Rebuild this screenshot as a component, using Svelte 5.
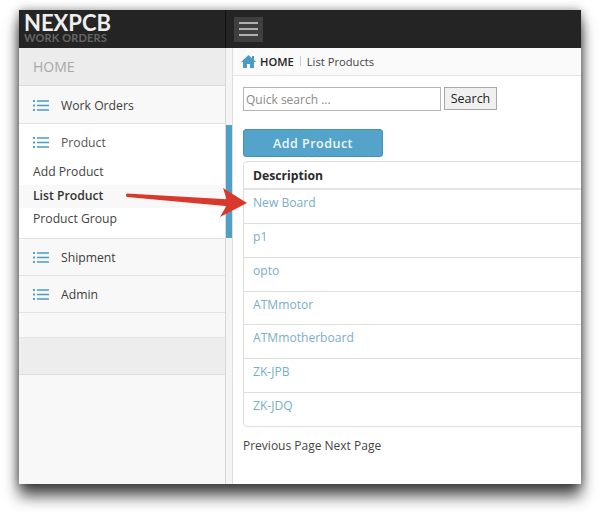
<script>
  const products = ['New Board', 'p1', 'opto', 'ATMmotor', 'ATMmotherboard', 'ZK-JPB', 'ZK-JDQ'];
  const subItems = [
    { label: 'Add Product', active: false },
    { label: 'List Product', active: true },
    { label: 'Product Group', active: false }
  ];
</script>

{#snippet listIcon()}
  <svg class="list-icon" width="16" height="11" viewBox="0 0 16 11" aria-hidden="true">
    <path d="M0 0h2v2H0zM0 4.5h2v2H0zM0 9h2v2H0z" fill="#4fa3c9" />
    <path d="M4 .2h12v1.6H4zM4 4.7h12v1.6H4zM4 9.2h12v1.6H4z" fill="#4a9dc2" />
  </svg>
{/snippet}

<div class="window">
  <header class="topbar">
    <div class="brand">
      <span class="brand-name">NEXPCB</span>
      <span class="brand-sub">WORK ORDERS</span>
    </div>
    <button class="toggle" aria-label="Toggle menu">
      <span></span><span></span><span></span>
    </button>
  </header>

  <div class="body">
    <aside class="sidebar">
      <div class="side-home">HOME</div>
      <div class="side-item first">{@render listIcon()}<span>Work Orders</span></div>
      <div class="side-group">
        <div class="side-item plain">{@render listIcon()}<span class="muted">Product</span></div>
        <ul class="sub">
          {#each subItems as item}
            <li class:active={item.active}>{item.label}</li>
          {/each}
        </ul>
      </div>
      <div class="side-item">{@render listIcon()}<span>Shipment</span></div>
      <div class="side-item">{@render listIcon()}<span>Admin</span></div>
      <div class="side-band"></div>
    </aside>

    <div class="rail"><div class="rail-mark"></div></div>

    <main class="main">
      <nav class="crumbs">
        <svg width="15" height="13" viewBox="0 0 15 13" aria-hidden="true">
          <path d="M7.500 0 11 3.200V1h2v4l2 2h-2v6H9V9H6v4H2V7H0z" fill="#4b9cc4" />
        </svg>
        <strong>HOME</strong>
        <span class="sep"></span>
        <span>List Products</span>
      </nav>

      <div class="content">
        <form class="search">
          <input type="text" placeholder="Quick search ..." />
          <button type="button">Search</button>
        </form>

        <button class="add">Add Product</button>

        <div class="table">
          <div class="head">Description</div>
          {#each products as name}
            <div class="row">{name}</div>
          {/each}
        </div>

        <p class="pager">Previous Page Next Page</p>
      </div>
    </main>
  </div>

  <svg class="arrow" width="130" height="36" viewBox="0 0 130 36" aria-hidden="true">
    <path d="M2 10.500 106 16.500V23.500L2 14a2 2 0 0 1 0-3.500z" fill="#d8392c" />
    <path d="M98 5 122 20 95 34 103 20z" fill="#d8392c" />
  </svg>
</div>

<style>
  :global(body) {
    margin: 0;
    background: #fff;
    font-family: "Open Sans", sans-serif;
  }

  :global(#app) {
    width: 600px;
    height: 512px;
    overflow: hidden;
  }

  .window {
    position: relative;
    width: 562px;
    height: 474px;
    margin: 10px 0 0 19px;
    overflow: hidden;
    color: #333;
    font-size: 12px;
    box-shadow: 0 12px 14px rgba(0, 0, 0, 0.7), 0 0 9px rgba(0, 0, 0, 0.4);
  }

  .topbar {
    display: flex;
    align-items: center;
    height: 38px;
    background: #242424;
  }

  .brand {
    display: flex;
    flex-direction: column;
    width: 207px;
    height: 38px;
    padding-left: 5px;
    box-sizing: border-box;
    border-right: 1px solid #111;
    font-family: Lato, sans-serif;
    font-weight: 700;
  }

  .brand-name {
    margin-top: 2px;
    color: #eee;
    font-size: 22px;
    line-height: 21px;
  }

  .brand-sub {
    margin-top: -2px;
    color: #666;
    font-size: 11px;
    line-height: 13px;
    letter-spacing: 0.15px;
  }

  .toggle {
    display: flex;
    flex-direction: column;
    justify-content: center;
    gap: 4px;
    width: 29px;
    height: 25px;
    margin-left: 8px;
    padding: 0 5px;
    border: 0;
    background: #3f3f3f;
  }

  .toggle span {
    height: 2px;
    background: #b0b0b0;
  }

  .body {
    display: flex;
    height: 436px;
  }

  .sidebar {
    width: 206px;
    flex: none;
    background: #f8f8f8;
  }

  .side-home {
    box-sizing: border-box;
    height: 38px;
    padding-left: 14px;
    background: #ececec;
    border-bottom: 1px solid #ddd;
    color: #a8a8a8;
    font-size: 14px;
    line-height: 38px;
  }

  .side-item {
    display: flex;
    align-items: center;
    gap: 12px;
    box-sizing: border-box;
    height: 37px;
    padding-left: 14px;
    border-bottom: 1px solid #e2e2e2;
    font-size: 12.2px;
    color: #3c3c3c;
  }

  .side-item.first {
    height: 38px;
    padding-top: 1px;
  }

  .side-item.plain {
    border-bottom: 0;
  }

  .muted {
    color: #555;
  }

  .list-icon {
    flex: none;
  }

  .side-group {
    box-sizing: border-box;
    height: 115px;
    background: #fff;
    border-bottom: 1px solid #e2e2e2;
  }

  .sub {
    margin: 0;
    padding: 0;
    list-style: none;
  }

  .sub li {
    height: 23.5px;
    padding-left: 14px;
    font-size: 12.2px;
    line-height: 22px;
    color: #444;
  }

  .sub li.active {
    background: #f8f8f8;
    color: #333;
    font-weight: 600;
  }

  .side-band {
    box-sizing: border-box;
    height: 38px;
    margin-top: 24px;
    background: #ededed;
    border-top: 1px solid #e6e6e6;
    border-bottom: 1px solid #ddd;
  }

  .rail {
    width: 8px;
    flex: none;
    box-sizing: border-box;
    background: #f4f4f4;
    border-left: 1px solid #d8d8d8;
    border-right: 1px solid #ddd;
  }

  .rail-mark {
    width: 6px;
    height: 113px;
    margin-top: 77px;
    background: #4f9fc7;
  }

  .main {
    flex: 1;
    min-width: 0;
    background: #fff;
  }

  .crumbs {
    display: flex;
    align-items: center;
    box-sizing: border-box;
    height: 28px;
    padding-left: 8px;
    padding-bottom: 1px;
    background: #fafafa;
    border-bottom: 1px solid #e4e4e4;
    font-size: 11.2px;
    color: #444;
  }

  .crumbs strong {
    margin-left: 4px;
    font-weight: 600;
    color: #222;
  }

  .sep {
    width: 1px;
    height: 10px;
    margin: 0 6px;
    background: #ccc;
  }

  .content {
    padding: 11px 0 0 10px;
  }

  .search {
    display: flex;
    gap: 3px;
    height: 24px;
  }

  .search input {
    width: 198px;
    height: 24px;
    box-sizing: border-box;
    padding: 0 2px;
    border: 1px solid #b5b5b5;
    background: #fff;
    font: 12px "Open Sans", sans-serif;
  }

  .search input::placeholder {
    color: #8a8a8a;
    opacity: 1;
  }

  .search button {
    width: 53px;
    height: 23px;
    padding: 0;
    border: 1px solid #a8a8a8;
    background: #f0f0f0;
    color: #222;
    font: 12.5px "Open Sans", sans-serif;
  }

  .add {
    display: block;
    width: 140px;
    height: 28px;
    margin-top: 18px;
    padding: 0;
    border: 1px solid #4690b5;
    border-radius: 3px;
    background: #53a3cb;
    color: #eef6fa;
    font: 600 12.5px "Open Sans", sans-serif;
    letter-spacing: 0.5px;
  }

  .table {
    width: 360px;
    margin-top: 4px;
    border: 1px solid #ddd;
    border-radius: 4px;
  }

  .head {
    height: 26px;
    padding-left: 9px;
    border-bottom: 2px solid #e4e4e4;
    color: #2a2a2a;
    font-size: 12.2px;
    font-weight: 700;
    line-height: 28px;
  }

  .row {
    height: 32.85px;
    padding: 0 0 0 9px;
    border-top: 1px solid #ddd;
    color: #78aec9;
    font-size: 12.1px;
    line-height: 26px;
  }

  .head + .row {
    border-top: 0;
  }

  .pager {
    margin: 10px 0 0;
    color: #444;
    font-size: 12px;
    line-height: 17px;
  }

  .arrow {
    position: absolute;
    left: 106px;
    top: 173px;
  }
</style>
